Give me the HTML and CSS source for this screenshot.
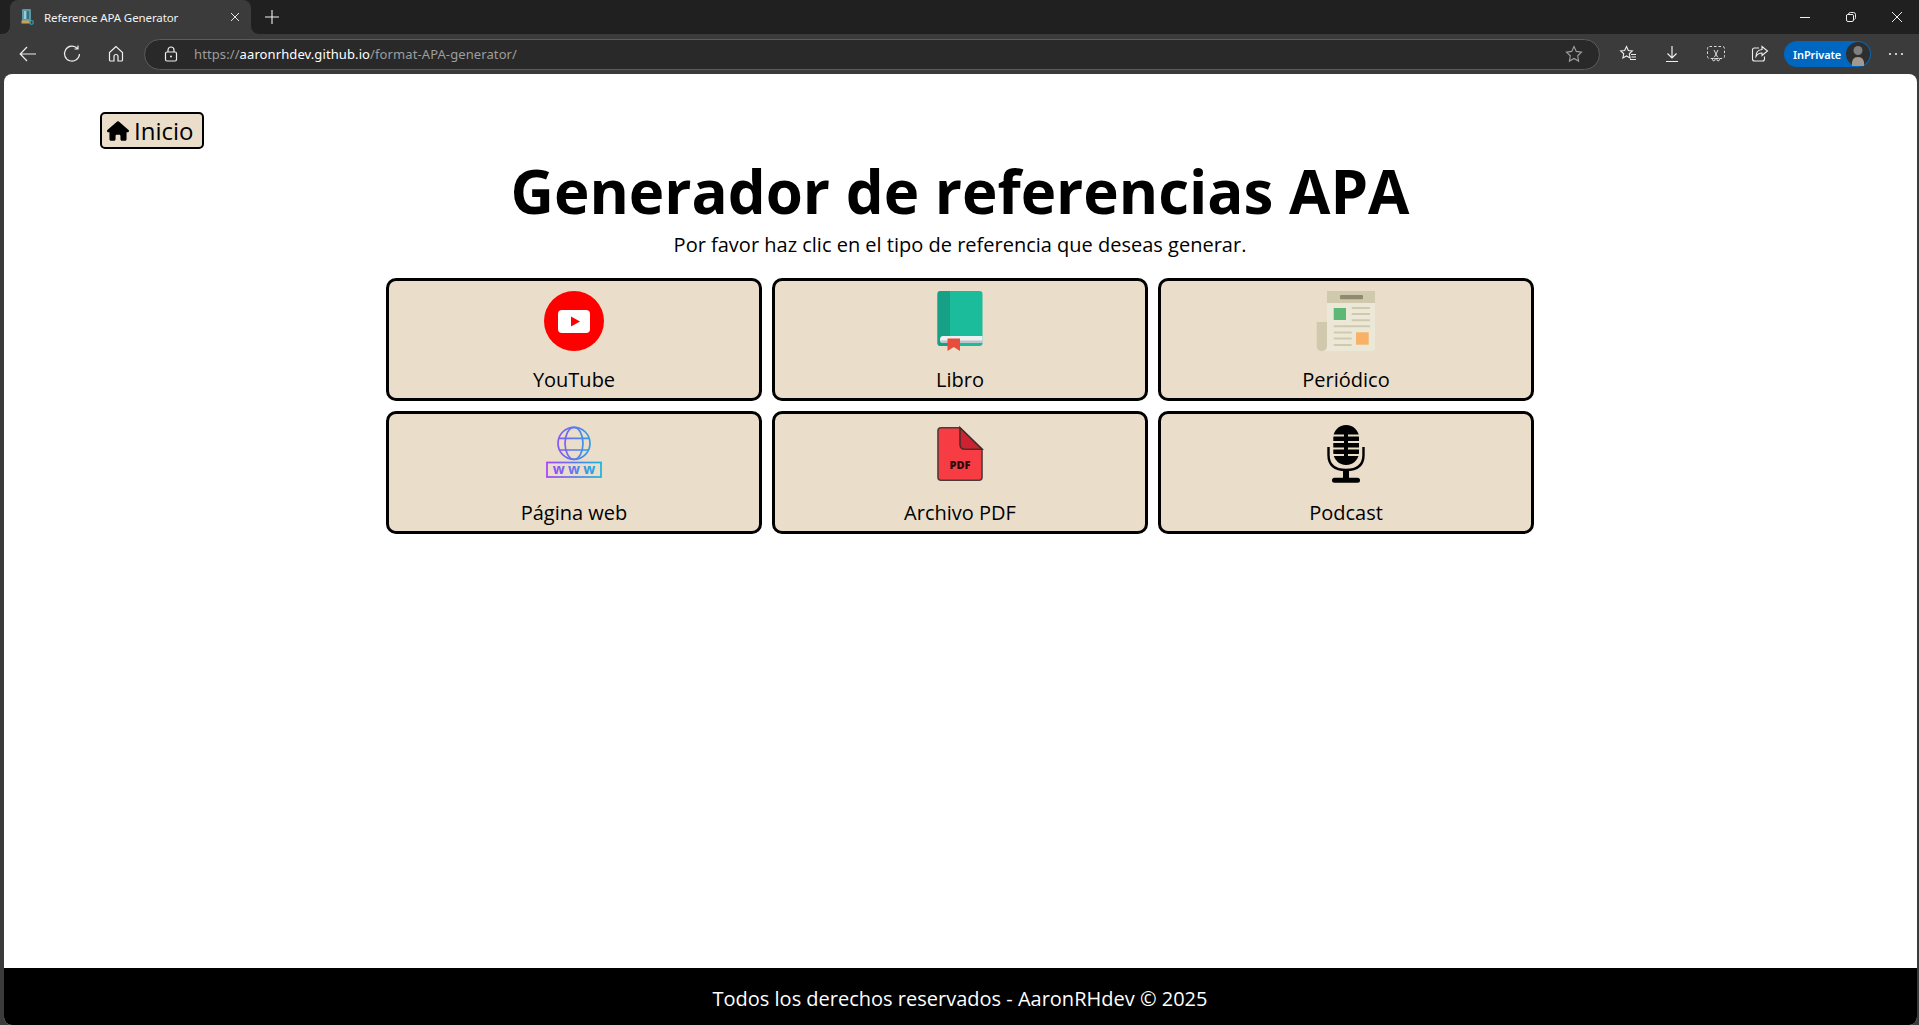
FILE: index.html
```html
<!DOCTYPE html>
<html lang="es">
<head>
<meta charset="utf-8">
<title>Reference APA Generator</title>
<link rel="stylesheet" href="styles.css">
</head>
<body>
<div class="browser-tabs">
  <div class="strip-start"></div>
  <div class="tab">
    <svg class="favicon" viewBox="0 0 16 16"><rect x="3" y="0" width="9" height="12" rx="1" fill="#5b98a8"/><rect x="5" y="2" width="2" height="8" fill="#9ccbd0"/><rect x="8" y="2" width="2" height="8" fill="#3f7078"/><rect x="2.500" y="11.500" width="9" height="3" fill="#c9a35c"/><circle cx="12.500" cy="13.500" r="1.800" fill="none" stroke="#2b9db0" stroke-width="1.300"/></svg>
    <span class="tab-title">Reference APA Generator</span>
    <svg class="tab-close" viewBox="0 0 10 10"><path d="M1 1l8 8M9 1l-8 8" stroke="#e6e6e6" stroke-width="1" fill="none"/></svg>
  </div>
  <div class="strip-rest">
    <button class="new-tab"><svg class="ic-14" viewBox="0 0 14 14"><path d="M7 0v14M0 7h14" stroke="#f0f0f0" stroke-width="1.100" fill="none"/></svg></button>
    <div class="spacer"></div>
    <button class="win"><svg class="ic-10" viewBox="0 0 10 10"><path d="M0 5.500h10" stroke="#eee" fill="none"/></svg></button>
    <button class="win"><svg class="ic-10" viewBox="0 0 10 10"><path d="M.5 3v5q0 1.500 1.500 1.500h4q1.500 0 1.500-1.500V3.500q0-1-1.500-1H2q-1.500 0-1.500 1zM2.500 2q.2-1.500 2-1.500h3q2 0 2 2v3q0 1.500-1 2" stroke="#eee" fill="none"/></svg></button>
    <button class="win win-last"><svg class="ic-10" viewBox="0 0 10 10"><path d="M0 0l10 10M10 0L0 10" stroke="#eee" fill="none"/></svg></button>
  </div>
</div>
<div class="toolbar">
  <button class="tool tool-back"><svg class="ic-18" viewBox="0 0 18 18"><path d="M17 9H1.500M8 2L1.200 9 8 16" stroke="#eee" stroke-width="1.200" fill="none"/></svg></button>
  <button class="tool"><svg class="ic-18" viewBox="0 0 18 18"><path d="M14.500 3.500A7.500 7.500 0 1 0 16.500 9M15 .5v3.500h-3.500" stroke="#eee" stroke-width="1.200" fill="none"/></svg></button>
  <button class="tool"><svg class="ic-18" viewBox="0 0 18 18"><path d="M9 1.500L2.500 7.500V15q0 1 1 1H7v-4.500q0-2 2-2t2 2V16h3.500q1 0 1-1V7.500z" stroke="#eee" stroke-width="1.200" fill="none"/></svg></button>
  <div class="address">
    <svg class="lock" viewBox="0 0 14 16"><rect x="1.500" y="6" width="11" height="9" rx="1.500" fill="none" stroke="#eee" stroke-width="1.200"/><path d="M4 6V4a3 3 0 0 1 6 0v2" fill="none" stroke="#eee" stroke-width="1.200"/><circle cx="7" cy="10.500" r="1" fill="#eee"/></svg>
    <span class="url"><span class="url-dim">https://</span><span class="url-host">aaronrhdev.github.io</span><span class="url-dim">/format-APA-generator/</span></span>
    <svg class="url-star" viewBox="0 0 18 18"><path d="M9 1.500l2.300 4.900 5.200.7-3.800 3.700.9 5.300L9 13.500l-4.600 2.600.9-5.300L1.500 7.100l5.200-.7z" fill="none" stroke="#a0a0a0" stroke-width="1.100"/></svg>
  </div>
  <button class="tool tool-first"><svg class="ic-18" viewBox="0 0 18 18"><path d="M7.500 1.500l1.800 4 4 .5-3 2.800.8 4.200-3.600-2-3.600 2 .8-4.200-3-2.800 4-.5zM12 9.500h5M12.500 12h4.500M11 14.500h6" fill="none" stroke="#eee" stroke-width="1.100"/></svg></button>
  <button class="tool"><svg class="ic-18" viewBox="0 0 18 18"><path d="M9 1v11.500M4.500 8.500L9 13l4.500-4.500M3 16.500h12" fill="none" stroke="#eee" stroke-width="1.200"/></svg></button>
  <button class="tool"><svg class="ic-18" viewBox="0 0 18 18"><rect x=".5" y="1.500" width="17" height="12" rx="2" fill="none" stroke="#ddd" stroke-dasharray="2.500 2"/><path d="M7 5l3.500 7M11 5l-3.500 7" fill="none" stroke="#eee" stroke-width=".9"/><circle cx="6.800" cy="14.500" r="1.300" fill="none" stroke="#eee" stroke-width=".9"/><circle cx="11.200" cy="14.500" r="1.300" fill="none" stroke="#eee" stroke-width=".9"/></svg></button>
  <button class="tool"><svg class="ic-18" viewBox="0 0 18 18"><path d="M8 3H3.500q-2 0-2 2v9q0 2 2 2h8q2 0 2-2v-2.500" fill="none" stroke="#eee" stroke-width="1.100"/><path d="M11 1.500l5.500 4.500-5.500 4.500V8q-4 0-6 3.500 0-6.500 6-7z" fill="none" stroke="#eee" stroke-width="1.100"/></svg></button>
  <div class="inprivate">
    <span class="inprivate-label">InPrivate</span>
    <svg class="avatar" viewBox="0 0 24 24"><circle cx="12" cy="12" r="12" fill="#2e2e2e"/><circle cx="12" cy="8.500" r="4.500" fill="#7f7f7f"/><path d="M6 24q-1-9 6-9t6 9z" fill="#a09a90"/></svg>
  </div>
  <button class="tool tool-more"><svg class="ic-18" viewBox="0 0 18 18"><circle cx="3" cy="9" r="1.100" fill="#eee"/><circle cx="9" cy="9" r="1.100" fill="#eee"/><circle cx="15" cy="9" r="1.100" fill="#eee"/></svg></button>
</div>
<div class="viewport">
  <main class="page">
    <div class="back-row">
      <a class="home-btn" href="#">
        <svg class="home-ic" viewBox="0 0 576 512"><path d="M575.800 255.500c0 18-15 32.100-32 32.100h-32l.7 160.200c0 2.700-.2 5.400-.5 8.100V472c0 22.100-17.900 40-40 40H456c-1.100 0-2.200 0-3.300-.1-1.400.1-2.800.1-4.200.1H392c-22.100 0-40-17.900-40-40V384c0-17.700-14.300-32-32-32H256c-17.700 0-32 14.300-32 32v88c0 22.100-17.900 40-40 40H104c-22.100 0-40-17.900-40-40V287.600H32c-18 0-32-14-32-32.100 0-9 3-17 10-24L266.400 8c7-7 15-8 22-8s15 2 21 7L564.800 231.500c8 7 12 15 11 24z"/></svg>
        <span>Inicio</span>
      </a>
    </div>
    <h1 class="title">Generador de referencias APA</h1>
    <p class="subtitle">Por favor haz clic en el tipo de referencia que deseas generar.</p>
    <section class="cards">
      <a class="card" href="#">
        <svg class="card-ic" viewBox="0 0 60 60"><circle cx="30" cy="30" r="30" fill="#f00"/><rect x="14" y="19" width="32" height="23" rx="4" fill="#fff"/><path d="M27 25.500l9 5-9 5z" fill="#f00"/></svg>
        <span class="card-label">YouTube</span>
      </a>
      <a class="card" href="#">
        <svg class="card-ic" viewBox="0 0 60 60"><rect x="7.500" y="0" width="45" height="55" rx="3" fill="#1abc9c"/><path d="M10.500 0H20v55h-9.500q-3 0-3-3V3q0-3 3-3z" fill="#16a085"/><path d="M52.500 45H13q-3 0-3 3.500t3 3.500h39.500z" fill="#ecf0f1"/><path d="M52.500 49.500H10.800q.6 2.500 2.200 2.500h39.500z" fill="#bdc3c7"/><path d="M17.500 47.500H30V60l-6.200-4-6.300 4z" fill="#e74c3c"/></svg>
        <span class="card-label">Libro</span>
      </a>
      <a class="card" href="#">
        <svg class="card-ic" viewBox="0 0 60 60"><path d="M.7 31H11v24.500a5 4.500 0 0 1-10.300 0z" fill="#d0c9ae"/><path d="M11 12h48v45q0 3-3 3H6q5 0 5-5z" fill="#ece8d8"/><rect x="11" y="0" width="48" height="12" fill="#d0c9ae"/><rect x="24" y="4" width="23" height="4.300" rx="1" fill="#8f8a72"/><rect x="17.700" y="17" width="12.300" height="12" fill="#5cb875"/><rect x="40" y="41.300" width="12.700" height="12.400" fill="#f7b267"/><path d="M35.700 17H54M35.700 23H54M35.700 29.300H54M17.700 35.300H54M17.700 41.500H35.700M17.700 47.500H35.700M17.700 54H35.700" stroke="#d0c9ae" stroke-width="2" fill="none"/></svg>
        <span class="card-label">Periódico</span>
      </a>
      <a class="card" href="#">
        <svg class="card-ic" viewBox="0 0 60 60"><defs><linearGradient id="webg" gradientUnits="userSpaceOnUse" x1="3" y1="0" x2="57" y2="0"><stop offset="0" stop-color="#a63ffb"/><stop offset="1" stop-color="#12b6de"/></linearGradient></defs><g fill="none" stroke="url(#webg)" stroke-width="1.700"><circle cx="30" cy="19.300" r="16"/><ellipse cx="30" cy="19.300" rx="9" ry="16"/><path d="M15 14.300h30M15 26h30"/><rect x="3" y="38.500" width="54" height="14.500"/></g><text class="www" x="14.700 30 45.300" y="50" fill="url(#webg)">www</text></svg>
        <span class="card-label">Página web</span>
      </a>
      <a class="card" href="#">
        <svg class="card-ic" viewBox="0 0 60 60"><path d="M11 3.700h19l22 21.500v28q0 3-3 3H11q-3 0-3-3V6.700q0-3 3-3z" fill="#f73c44" stroke="#4f3a3a" stroke-width="1.600"/><path d="M30 3.700l22 21.500H35q-5 0-5-5z" fill="#cc2231" stroke="#4f2a2a" stroke-width="1.600"/><text class="pdf" x="30" y="45">PDF</text></svg>
        <span class="card-label">Archivo PDF</span>
      </a>
      <a class="card" href="#">
        <svg class="card-ic" viewBox="0 0 60 60"><rect x="17.300" y="1" width="25.700" height="40" rx="12.800" fill="#000"/><path d="M17 11.500h11M32 11.500h11M17 18h11M32 18h11M17 24.500h11M32 24.500h11M17 31h11M32 31h11" stroke="#eaddca" stroke-width="2"/><path d="M12.500 23v8q0 15 17.500 15t17.500-15v-8" fill="none" stroke="#000" stroke-width="2.400"/><rect x="27" y="46" width="6" height="9" fill="#000"/><rect x="16" y="53.700" width="28" height="5" rx="2.500" fill="#000"/></svg>
        <span class="card-label">Podcast</span>
      </a>
    </section>
  </main>
  <footer class="footer">Todos los derechos reservados - AaronRHdev © 2025</footer>
</div>
</body>
</html>
```
FILE: styles.css
```css
* { box-sizing: border-box; }
html, body { margin: 0; height: 100%; }
body {
  display: flex;
  flex-direction: column;
  height: 100vh;
  overflow: hidden;
  background: #3b3b3b;
  font-family: "Open Sans", sans-serif;
  color: #000;
}
button { background: none; border: 0; padding: 0; display: flex; align-items: center; justify-content: center; }
svg { display: block; }
.ic-10 { width: 10px; height: 10px; }
.ic-14 { width: 14px; height: 14px; }
.ic-18 { width: 18px; height: 18px; }

.browser-tabs {
  display: flex;
  height: 34px;
  flex: none;
  background: linear-gradient(#202020 50%, #3b3b3b 50%);
}
.strip-start { width: 10px; background: #202020; border-bottom-right-radius: 8px; }
.tab {
  width: 241px;
  display: flex;
  align-items: center;
  padding: 0 10px 0 9px;
  background: #3b3b3b;
  border-radius: 8px 8px 0 0;
}
.favicon { width: 16px; height: 16px; flex: none; }
.tab-title {
  flex: 1;
  margin-left: 9px;
  font: 11.5px "Noto Sans", sans-serif;
  letter-spacing: -.1px;
  color: #f2f2f2;
  white-space: nowrap;
}
.tab-close { width: 10px; height: 10px; flex: none; margin-right: 1px; }
.strip-rest { flex: 1; display: flex; background: #202020; border-bottom-left-radius: 8px; }
.new-tab { width: 42px; height: 34px; }
.spacer { flex: 1; }
.win { width: 46px; height: 34px; }
.win-last { width: 45px; }

.toolbar { display: flex; align-items: center; height: 40px; flex: none; padding: 0 1px 0 5px; background: #3b3b3b; }
.tool { width: 44px; height: 34px; flex: none; }
.tool-back { width: 45px; }
.tool-first { margin-left: 6px; }
.tool-more { margin-left: 3px; }
.address {
  flex: 1;
  height: 31px;
  margin-left: 6px;
  display: flex;
  align-items: center;
  padding: 0 16px 0 19px;
  background: #292929;
  border: 1px solid #5c5c5c;
  border-radius: 16px;
}
.lock { width: 14px; height: 16px; flex: none; }
.url { flex: 1; margin-left: 16px; font: 13px "Noto Sans", sans-serif; letter-spacing: .1px; white-space: nowrap; }
.url-dim { color: #9d9d9d; }
.url-host { color: #fff; }
.url-star { width: 18px; height: 18px; flex: none; }
.inprivate {
  width: 87px;
  height: 26px;
  margin-left: 2px;
  flex: none;
  display: flex;
  align-items: center;
  justify-content: space-between;
  padding: 0 1px 0 9px;
  background: #0067c0;
  border-radius: 13px;
}
.inprivate-label { font: 600 11px "Noto Sans", sans-serif; color: #fff; letter-spacing: -.1px; }
.avatar { width: 24px; height: 24px; }

.viewport {
  flex: 1;
  min-height: 0;
  display: flex;
  flex-direction: column;
  margin: 0 2px 0 4px;
  background: #fff;
  border-radius: 8px;
  overflow: hidden;
}
.page { flex: 1; padding: 38px 1px 0 0; }
.back-row { padding-left: 96px; }
.home-btn {
  display: inline-flex;
  align-items: center;
  gap: 5px;
  height: 37px;
  padding: 0 9px 0 5px;
  background: #eaddca;
  border: 2px solid #000;
  border-radius: 5px;
  color: #000;
  font-size: 24px;
  line-height: 1;
  text-decoration: none;
}
.home-ic { width: 22px; height: 20px; }
.title {
  margin: 2px 0 0;
  text-align: center;
  font-size: 60px;
  line-height: 80px;
  font-weight: 700;
}
.subtitle { margin: 0; text-align: center; font-size: 20px; line-height: 27px; }
.cards {
  width: 1148px;
  margin: 20px auto 0;
  display: grid;
  grid-template-columns: repeat(3, 376px);
  grid-auto-rows: 123px;
  gap: 10px;
}
.card {
  display: flex;
  flex-direction: column;
  align-items: center;
  padding: 10px 10px 0;
  background: #eaddca;
  border: 3px solid #000;
  border-radius: 10px;
  color: #000;
  text-decoration: none;
}
.card-ic { width: 60px; height: 60px; flex: none; }
.card-label { margin-top: 15px; font-size: 20px; line-height: 27px; }
.www { font: 700 14px "Open Sans", sans-serif; text-anchor: middle; }
.pdf { font: 800 11px "Open Sans", sans-serif; text-anchor: middle; fill: #2a0a0d; }
.footer {
  flex: none;
  height: 57px;
  padding: 17px 1px 0 0;
  background: #000;
  color: #fff;
  text-align: center;
  font-size: 20px;
  line-height: 27px;
}
```
